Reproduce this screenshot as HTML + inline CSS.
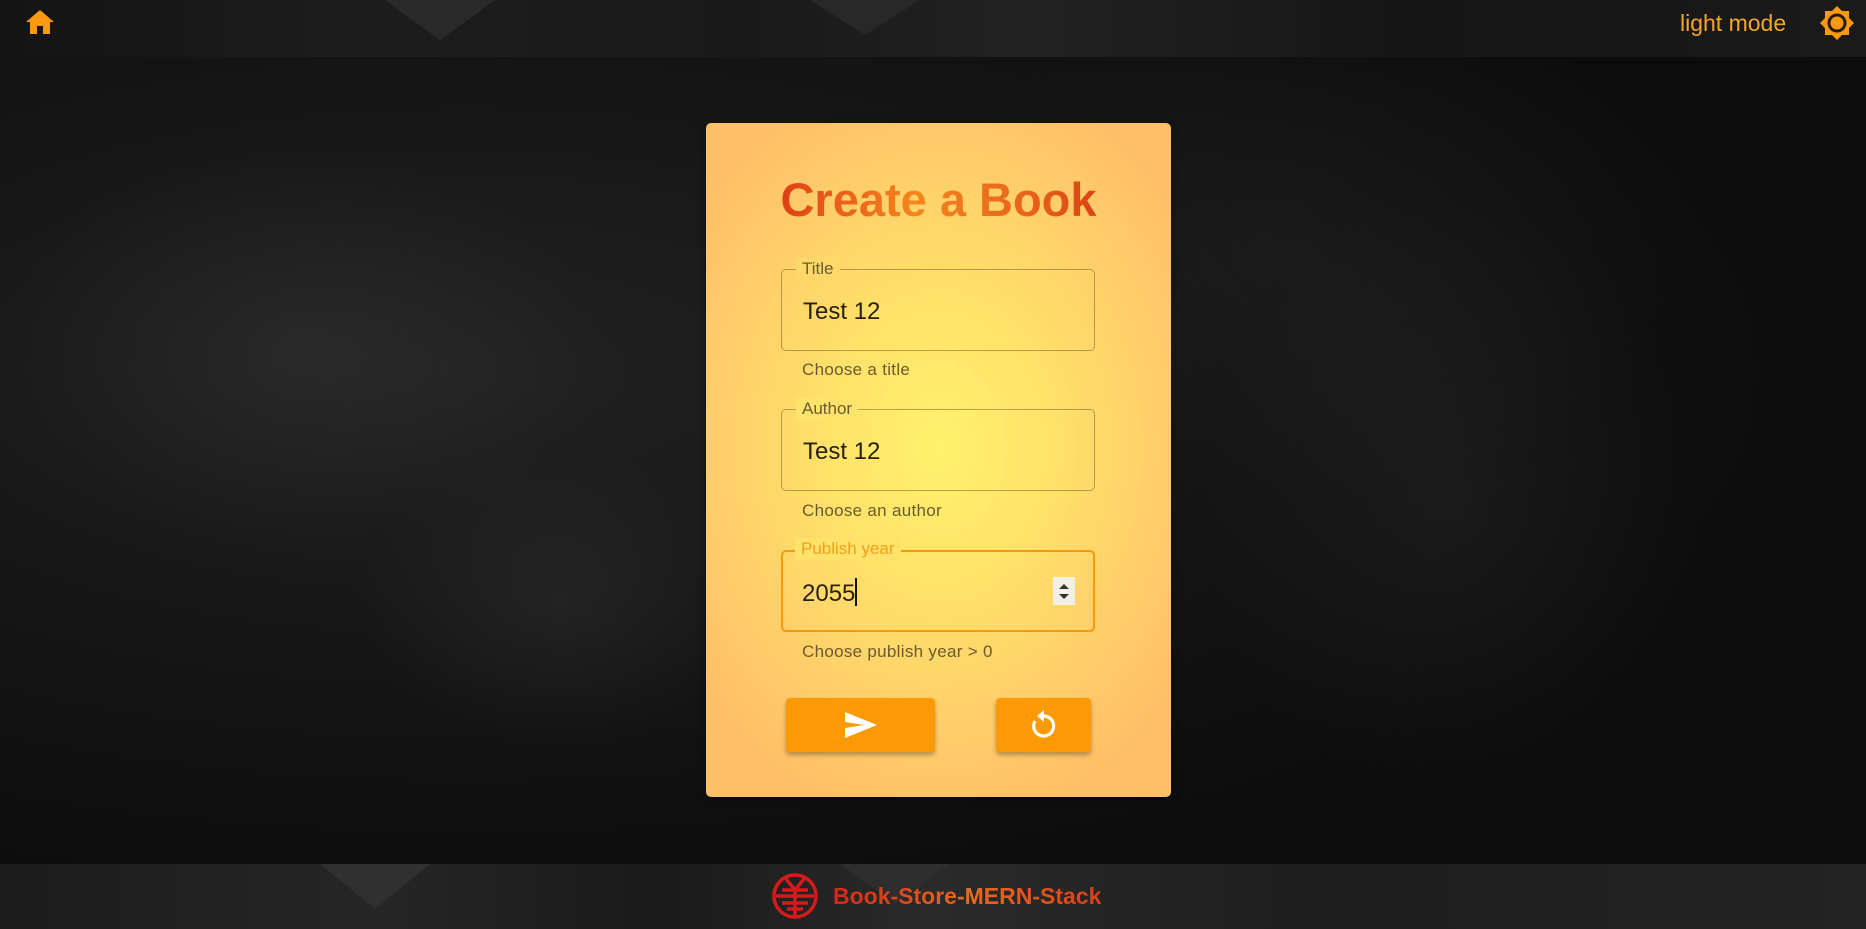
<!DOCTYPE html>
<html><head><meta charset="utf-8">
<style>
*{margin:0;padding:0;box-sizing:border-box}
html,body{width:1866px;height:929px;overflow:hidden}
body{font-family:"Liberation Sans",sans-serif;position:relative;
background:radial-gradient(ellipse at 25% 40%,#222 0%,#161616 35%,#0c0c0c 70%),#0e0e0e;}
.tex{position:absolute;inset:0;background:
radial-gradient(ellipse 300px 200px at 300px 350px,rgba(70,70,70,.25),transparent),
radial-gradient(ellipse 250px 300px at 1450px 500px,rgba(60,60,60,.22),transparent),
radial-gradient(ellipse 200px 150px at 560px 600px,rgba(80,80,80,.2),transparent),
radial-gradient(ellipse 400px 250px at 1300px 250px,rgba(50,50,50,.22),transparent);}
.top{position:absolute;left:0;top:0;width:1866px;height:57px;
background:linear-gradient(90deg,#141414,#1d1d1d 20%,#191919 40%,#222 55%,#161616 75%,#1a1a1a 100%);}
.foot{position:absolute;left:0;top:864px;width:1866px;height:65px;
background:linear-gradient(90deg,#1c1c1c,#262626 20%,#1a1a1a 35%,#2a2a2a 50%,#1e1e1e 70%,#232323 100%);}
.tri{position:absolute;width:0;height:0;border-left:55px solid transparent;border-right:55px solid transparent;}
.card{position:absolute;left:706px;top:123px;width:465px;height:674px;border-radius:5px;
background:radial-gradient(ellipse 300px 380px at 50% 48%,#fff26c 0%,#ffe36a 35%,#ffcd6a 75%,#ffbf66 100%);
box-shadow:0 2px 8px rgba(0,0,0,.4);}
h1{position:absolute;width:465px;top:170px;text-align:center;font-size:47px;font-weight:bold;line-height:60px;
background:linear-gradient(90deg,#c8170e 0%,#e8561a 25%,#f4861f 45%,#e8621a 70%,#c8200e 100%);
-webkit-background-clip:text;background-clip:text;color:transparent;}
.field{position:absolute;left:781px;width:314px;height:82px;border:1px solid rgba(120,100,40,.55);border-radius:5px;}
.lbl{position:absolute;left:14px;top:-12px;padding:0 6px;font-size:17px;color:#6b5a30;line-height:22px}
.val{position:absolute;left:21px;top:28px;font-size:24px;color:#2a2010;line-height:28px}
.help{position:absolute;left:802px;font-size:17px;color:#6b5a30;letter-spacing:.3px}
.btn{position:absolute;top:698px;height:54px;background:#fb9a06;border-radius:4px;
box-shadow:0 3px 5px rgba(0,0,0,.3);display:flex;align-items:center;justify-content:center}
</style></head><body>
<div class="tex"></div>
<div class="top">
<div class="tri" style="left:385px;top:0;border-top:40px solid #2a2a2a"></div>
<div class="tri" style="left:810px;top:0;border-top:35px solid #282828"></div>
</div>
<svg style="position:absolute;left:25px;top:9px" width="30" height="26" viewBox="0 0 30 26"><path d="M15 1 L29 13 L25 13 L25 25 L18 25 L18 17 L12 17 L12 25 L5 25 L5 13 L1 13 Z" fill="#fb9a10"/></svg>
<div style="position:absolute;left:1680px;top:9px;font-size:23px;color:#f5a623;line-height:28px">light mode</div>
<svg style="position:absolute;left:1819px;top:5px" width="36" height="36" viewBox="0 0 36 36">
<path d="M18 1 L23 6 L30 6 L30 13 L35 18 L30 23 L30 30 L23 30 L18 35 L13 30 L6 30 L6 23 L1 18 L6 13 L6 6 L13 6 Z" fill="#fb9a10"/>
<circle cx="18" cy="18" r="8" fill="none" stroke="#2a1a05" stroke-width="3"/></svg>

<div class="card"></div>
<h1 style="left:706px">Create a Book</h1>

<div class="field" style="top:269px"><span class="lbl" style="background:#ffd86a">Title</span><span class="val">Test 12</span></div>
<div class="help" style="top:360px">Choose a title</div>
<div class="field" style="top:409px"><span class="lbl" style="background:#ffe36b">Author</span><span class="val">Test 12</span></div>
<div class="help" style="top:501px">Choose an author</div>
<div class="field" style="top:550px;border:2.5px solid #f29a0c"><span class="lbl" style="color:#f2a019;top:-14px;left:12px;background:#ffe26a">Publish year</span><span class="val" style="left:19px;top:26px">2055<span style="display:inline-block;width:2px;height:28px;background:#111;vertical-align:-5px"></span></span>
<svg style="position:absolute;left:270px;top:25px" width="22" height="28" viewBox="0 0 22 28"><rect width="22" height="28" fill="#f2efe6"/><path d="M6 12 L11 7 L16 12 Z M6 17 L16 17 L11 22 Z" fill="#333"/></svg></div>
<div class="help" style="top:642px">Choose publish year &gt; 0</div>

<div class="btn" style="left:786px;width:149px">
<svg width="34" height="28" viewBox="0 0 34 28"><path d="M1 1 L33 14 L1 27 L1 17 L20 14 L1 11 Z" fill="#fff"/></svg></div>
<div class="btn" style="left:996px;width:95px">
<svg width="28" height="30" viewBox="0 0 28 30"><path d="M14 6 A10 10 0 1 1 5 11" fill="none" stroke="#fff" stroke-width="3.2"/><path d="M14 0 L14 12 L7 6 Z" fill="#fff"/></svg></div>

<div class="foot">
<div class="tri" style="left:320px;top:0;border-top:45px solid #303030"></div>
<div class="tri" style="left:840px;top:0;border-top:40px solid #2e2e2e"></div>
</div>
<svg style="position:absolute;left:772px;top:873px" width="46" height="46" viewBox="0 0 46 46">
<circle cx="23" cy="23" r="21" fill="none" stroke="#d41a1a" stroke-width="3.5"/>
<path d="M4 23 H42 M10 17 H36 M10 30 H36 M23 17 V44 M14 6 L23 17 L32 6 M15 36 L31 36" stroke="#d41a1a" stroke-width="3.5" fill="none"/></svg>
<div style="position:absolute;left:833px;top:882px;font-size:23px;font-weight:bold;line-height:28px;
background:linear-gradient(90deg,#d0281a,#e86a1e 50%,#d8401a);-webkit-background-clip:text;background-clip:text;color:transparent">Book-Store-MERN-Stack</div>
</body></html>
